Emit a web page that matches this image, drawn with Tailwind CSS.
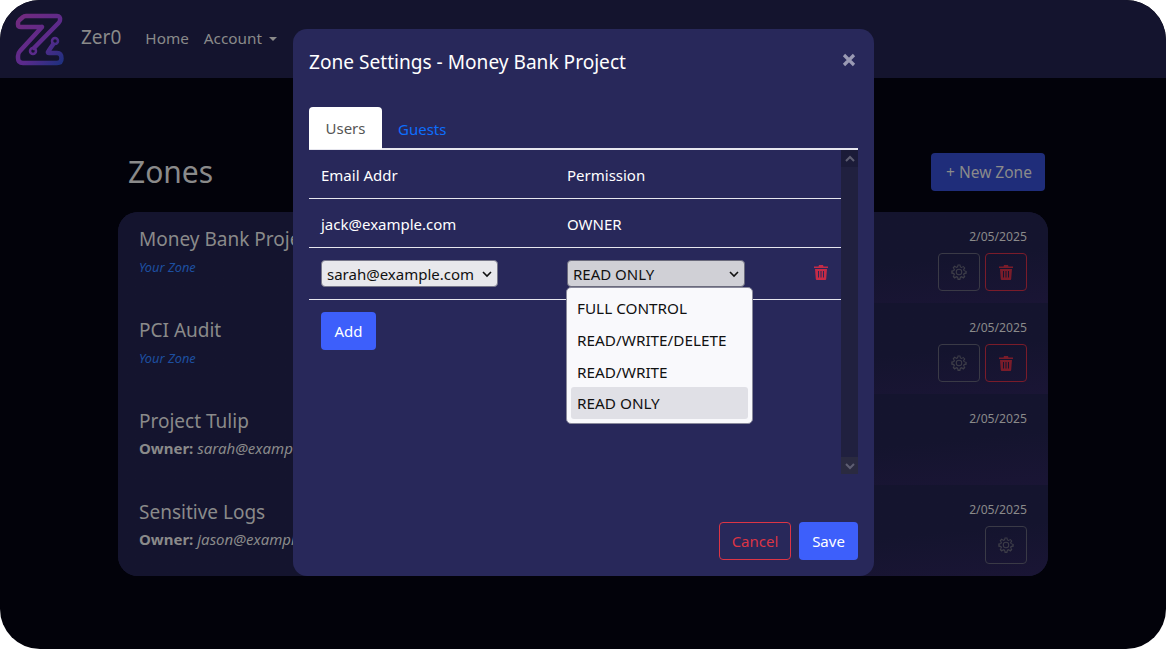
<!DOCTYPE html>
<html>
<head>
<meta charset="utf-8">
<script src="https://cdn.jsdelivr.net/npm/@tailwindcss/browser@4"></script>
</head>
<body class="bg-white overflow-hidden font-['Noto_Sans',sans-serif]">
<div class="relative w-[1166px] h-[649px] rounded-[40px] overflow-hidden bg-[#02020a] text-[#8a8a8a]">
  <nav class="h-[78px] bg-[#14142e] flex items-center pl-[14px]">
    <svg class="w-[50px] h-[54px]" viewBox="0 0 50 54" fill="none" stroke-width="4.500" stroke-linecap="round" stroke-linejoin="round">
      <defs><linearGradient id="g" gradientUnits="userSpaceOnUse" x1="4" y1="4" x2="48" y2="50"><stop offset="0" stop-color="#722a7e"/><stop offset="0.6" stop-color="#5a2a8c"/><stop offset="1" stop-color="#20307f"/></linearGradient></defs>
      <path stroke="url(#g)" d="M28 15 H7 Q4 15 4 12.500 V11 Q4 9.500 5.500 8 L9 5 Q10 4 12 4 H43 Q46.500 4 46 8 Q46 9.500 44.500 11 L20 36 M28 15 L6 39 Q4 41 4 44 V46 Q4 51 9 51 H43 Q47.500 51 47.500 46.500 Q47.500 41 43 41 H35 Q33 41 34.500 39 L39 32.500"/>
      <circle cx="19" cy="39" r="3" stroke="url(#g)" stroke-width="2.500"/>
      <circle cx="41" cy="29" r="3" stroke="url(#g)" stroke-width="2.500"/>
    </svg>
    <span class="ml-[17px] text-[19px] -mt-[4px]">Zer0</span>
    <span class="ml-[24px] text-[15.300px] -mt-[2px]">Home</span>
    <span class="ml-[15px] text-[15.300px] -mt-[2px]">Account</span>
    <span class="ml-[7px] -mt-[1px] w-0 h-0 border-x-[4.500px] border-x-transparent border-t-[4.500px] border-t-[#8a8a8a]"></span>
  </nav>

  <main class="px-[118px]">
    <div class="flex items-start justify-between pl-[10px] pr-[3px] pt-[75px] h-[134px]">
      <h1 class="text-[30px] leading-[38px]">Zones</h1>
      <button class="w-[114px] h-[38px] rounded bg-[#1f2d7a] text-[15.500px] text-[#8a8a8a] pl-[2px] pt-[1px]">+ New Zone</button>
    </div>
    <div class="rounded-[20px] overflow-hidden bg-[#14142e]">
      <div class="h-[91px] px-[21px] pt-[13px] flex justify-between bg-gradient-to-br from-[#14142e] from-70% to-[#1a1535]">
        <div><div class="text-[19px]">Money Bank Project</div><div class="text-[12.800px] italic text-[#1d4fa0] mt-[4px]">Your Zone</div></div>
        <div class="flex flex-col items-end"><span class="text-[12.200px] mt-[3px]">2/05/2025</span>
          <div class="flex gap-[5px] mt-[7px]">
            <button class="w-[42px] h-[38px] rounded border border-[#3a3a46] flex items-center justify-center"><svg class="w-4 h-4" viewBox="0 0 16 16" fill="#3d3d48"><path d="M8 4.750a3.250 3.250 0 1 0 0 6.500 3.250 3.250 0 0 0 0-6.500M5.750 8a2.250 2.250 0 1 1 4.500 0 2.250 2.250 0 0 1-4.500 0"/><path fill-rule="evenodd" d="M6.600.6h2.800l.4 2 .9.4 1.700-1.100 2 2-1.100 1.700.4.9 2 .4v2.800l-2 .4-.4.9 1.100 1.700-2 2-1.700-1.100-.9.4-.4 2H6.600l-.4-2-.9-.4-1.700 1.100-2-2 1.100-1.700-.4-.9-2-.4V6.600l2-.4.4-.9L1.600 3.600l2-2 1.700 1.100.9-.4zm.8 1-.3 1.700-1.700.7-1.500-1-.9.9 1 1.500-.7 1.700-1.700.3v1.200l1.700.3.7 1.700-1 1.500.9.9 1.500-1 1.700.7.3 1.700h1.200l.3-1.700 1.700-.7 1.500 1 .9-.9-1-1.500.7-1.700 1.700-.3V7.400l-1.700-.3-.7-1.700 1-1.500-.9-.9-1.500 1-1.700-.7-.3-1.700z"/></svg></button>
            <button class="w-[42px] h-[38px] rounded border border-[#7a1c2a] flex items-center justify-center"><svg class="w-[14px] h-4" viewBox="0 0 14 16" fill="#7a1c2a"><path d="M0 2.500h4.500L5 1h4l.5 1.500H14V4H0zM1 5h12l-.8 10a1 1 0 0 1-1 1H2.800a1 1 0 0 1-1-1z"/><path fill="#14142e" d="M4 7h1v6.500H4zM6.500 7h1v6.500h-1zM9 7h1v6.500H9z"/></svg></button>
          </div>
        </div>
      </div>
      <div class="h-[91px] px-[21px] pt-[13px] flex justify-between bg-gradient-to-br from-[#14142e] from-70% to-[#1a1535]">
        <div><div class="text-[19px]">PCI Audit</div><div class="text-[12.800px] italic text-[#1d4fa0] mt-[4px]">Your Zone</div></div>
        <div class="flex flex-col items-end"><span class="text-[12.200px] mt-[3px]">2/05/2025</span>
          <div class="flex gap-[5px] mt-[7px]">
            <button class="w-[42px] h-[38px] rounded border border-[#3a3a46] flex items-center justify-center"><svg class="w-4 h-4" viewBox="0 0 16 16" fill="#3d3d48"><path d="M8 4.750a3.250 3.250 0 1 0 0 6.500 3.250 3.250 0 0 0 0-6.500M5.750 8a2.250 2.250 0 1 1 4.500 0 2.250 2.250 0 0 1-4.500 0"/><path fill-rule="evenodd" d="M6.600.6h2.800l.4 2 .9.4 1.700-1.100 2 2-1.100 1.700.4.9 2 .4v2.800l-2 .4-.4.9 1.100 1.700-2 2-1.700-1.100-.9.4-.4 2H6.600l-.4-2-.9-.4-1.700 1.100-2-2 1.100-1.700-.4-.9-2-.4V6.600l2-.4.4-.9L1.600 3.600l2-2 1.700 1.100.9-.4zm.8 1-.3 1.700-1.700.7-1.500-1-.9.9 1 1.500-.7 1.700-1.700.3v1.200l1.700.3.7 1.700-1 1.500.9.9 1.500-1 1.700.7.3 1.700h1.200l.3-1.700 1.700-.7 1.500 1 .9-.9-1-1.500.7-1.700 1.700-.3V7.400l-1.700-.3-.7-1.700 1-1.500-.9-.9-1.500 1-1.700-.7-.3-1.700z"/></svg></button>
            <button class="w-[42px] h-[38px] rounded border border-[#7a1c2a] flex items-center justify-center"><svg class="w-[14px] h-4" viewBox="0 0 14 16" fill="#7a1c2a"><path d="M0 2.500h4.500L5 1h4l.5 1.500H14V4H0zM1 5h12l-.8 10a1 1 0 0 1-1 1H2.800a1 1 0 0 1-1-1z"/><path fill="#14142e" d="M4 7h1v6.500H4zM6.500 7h1v6.500h-1zM9 7h1v6.500H9z"/></svg></button>
          </div>
        </div>
      </div>
      <div class="h-[91px] px-[21px] pt-[13px] flex justify-between bg-gradient-to-br from-[#14142e] from-70% to-[#1a1535]">
        <div><div class="text-[19px]">Project Tulip</div><div class="text-[15px] mt-[1px]"><b>Owner:</b> <i>sarah@example.com</i></div></div>
        <div class="flex flex-col items-end"><span class="text-[12.200px] mt-[3px]">2/05/2025</span></div>
      </div>
      <div class="h-[91px] px-[21px] pt-[13px] flex justify-between bg-gradient-to-br from-[#14142e] from-70% to-[#1a1535]">
        <div><div class="text-[19px]">Sensitive Logs</div><div class="text-[15px] mt-[1px]"><b>Owner:</b> <i>jason@example.com</i></div></div>
        <div class="flex flex-col items-end"><span class="text-[12.200px] mt-[3px]">2/05/2025</span>
          <div class="flex gap-[5px] mt-[7px]">
            <button class="w-[42px] h-[38px] rounded border border-[#3a3a46] flex items-center justify-center"><svg class="w-4 h-4" viewBox="0 0 16 16" fill="#3d3d48"><path d="M8 4.750a3.250 3.250 0 1 0 0 6.500 3.250 3.250 0 0 0 0-6.500M5.750 8a2.250 2.250 0 1 1 4.500 0 2.250 2.250 0 0 1-4.500 0"/><path fill-rule="evenodd" d="M6.600.6h2.800l.4 2 .9.4 1.700-1.100 2 2-1.100 1.700.4.9 2 .4v2.800l-2 .4-.4.9 1.100 1.700-2 2-1.700-1.100-.9.4-.4 2H6.600l-.4-2-.9-.4-1.700 1.100-2-2 1.100-1.700-.4-.9-2-.4V6.600l2-.4.4-.9L1.600 3.600l2-2 1.700 1.100.9-.4zm.8 1-.3 1.700-1.700.7-1.500-1-.9.9 1 1.500-.7 1.700-1.700.3v1.200l1.700.3.7 1.700-1 1.500.9.9 1.500-1 1.700.7.3 1.700h1.200l.3-1.700 1.700-.7 1.500 1 .9-.9-1-1.500.7-1.700 1.700-.3V7.400l-1.700-.3-.7-1.700 1-1.500-.9-.9-1.500 1-1.700-.7-.3-1.700z"/></svg></button>
          </div>
        </div>
      </div>
    </div>
  </main>

  <section class="absolute left-[293px] top-[29px] w-[581px] h-[547px] rounded-[14px] bg-[#28285a] p-4 text-white flex flex-col">
    <div class="flex justify-between h-[62px]">
      <h2 class="text-[19.100px] leading-[34px]">Zone Settings - Money Bank Project</h2>
      <svg class="w-[14px] h-[14px] mt-[8px] mr-[2px]" viewBox="0 0 14 14" stroke="#9a9ab4" stroke-width="3.200"><path d="M2 2l10 10M12 2L2 12"/></svg>
    </div>
    <div class="flex h-[43px] border-b-2 border-[#e6e6ee] text-[15px]">
      <div class="w-[73px] h-[42px] bg-white text-[#555] rounded-t flex items-center justify-center pt-[1px]">Users</div>
      <div class="ml-[16px] mt-[1px] leading-[42px] text-[#0d6efd]">Guests</div>
    </div>
    <div class="relative h-[324px] flex text-[15px]">
      <div class="w-[532px]">
        <div class="h-[49px] border-b border-[#e6e6ee] flex items-center pt-[2px]"><span class="ml-3 w-[246px]">Email Addr</span><span>Permission</span></div>
        <div class="h-[49px] border-b border-[#e6e6ee] flex items-center pt-[2px]"><span class="ml-3 w-[246px]">jack@example.com</span><span>OWNER</span></div>
        <div class="h-[52px] border-b border-[#e6e6ee] flex items-start pt-[12px]">
          <div class="ml-3 w-[177px] h-[27px] rounded bg-[#e8e8ec] border border-[#77778a] text-[#111] pl-[5px] pr-[5px] flex items-center justify-between pt-[1px]"><span>sarah@example.com</span><svg class="w-[10px] h-[10px]" viewBox="0 0 10 10" fill="none" stroke="#111" stroke-width="1.600"><path d="M1 3l4 4 4-4"/></svg></div>
          <div class="ml-[69px] w-[178px] h-[27px] rounded bg-[#d0d0d6] border border-[#6a6a7c] text-[#111] pl-[5px] pr-[5px] flex items-center justify-between pt-[1px]"><span>READ ONLY</span><svg class="w-[10px] h-[10px]" viewBox="0 0 10 10" fill="none" stroke="#111" stroke-width="1.600"><path d="M1 3l4 4 4-4"/></svg></div>
          <svg class="ml-[69px] w-[14px] h-4 mt-[4px]" viewBox="0 0 14 16" fill="#c42b47"><path d="M0 2.500h4.500L5 1h4l.5 1.500H14V4H0zM1 5h12l-.8 10a1 1 0 0 1-1 1H2.800a1 1 0 0 1-1-1z"/><path fill="#28285a" d="M4 7h1v6.500H4zM6.500 7h1v6.500h-1zM9 7h1v6.500H9z"/></svg>
        </div>
        <button class="ml-3 mt-3 w-[55px] h-[38px] rounded bg-[#3d5ffb] text-[15px] text-white">Add</button>
      </div>
      <div class="w-[17px] bg-[#20203f] flex flex-col justify-between">
        <div class="h-[17px] bg-[#1b1b38] flex items-center justify-center"><svg class="w-[10px] h-[10px]" viewBox="0 0 10 10" fill="none" stroke="#5e5e72" stroke-width="2"><path d="M1 7l4-4 4 4"/></svg></div>
        <div class="h-[17px] bg-[#2a2a40] flex items-center justify-center"><svg class="w-[10px] h-[10px]" viewBox="0 0 10 10" fill="none" stroke="#5e5e72" stroke-width="2"><path d="M1 3l4 4 4-4"/></svg></div>
      </div>
      <div class="absolute left-[257px] top-[137px] w-[187px] h-[137px] rounded-[5px] bg-[#f9f9fc] border border-[#8a8a9c] px-1 pt-1 text-[#111] text-[15.300px]">
        <div class="h-[32px] px-[6px] leading-[32px]">FULL CONTROL</div>
        <div class="h-[32px] px-[6px] leading-[32px]">READ/WRITE/DELETE</div>
        <div class="h-[31px] px-[6px] leading-[33px]">READ/WRITE</div>
        <div class="h-[32px] px-[6px] leading-[32px] bg-[#e0e0e6] rounded-[3px]">READ ONLY</div>
      </div>
    </div>
    <div class="flex justify-end gap-2 mt-[48px] text-[15px]">
      <button class="w-[72px] h-[38px] rounded border border-[#dc3545] text-[#dc3545]">Cancel</button>
      <button class="w-[59px] h-[38px] rounded bg-[#3d5ffb] text-white">Save</button>
    </div>
  </section>
</div>
</body>
</html>
